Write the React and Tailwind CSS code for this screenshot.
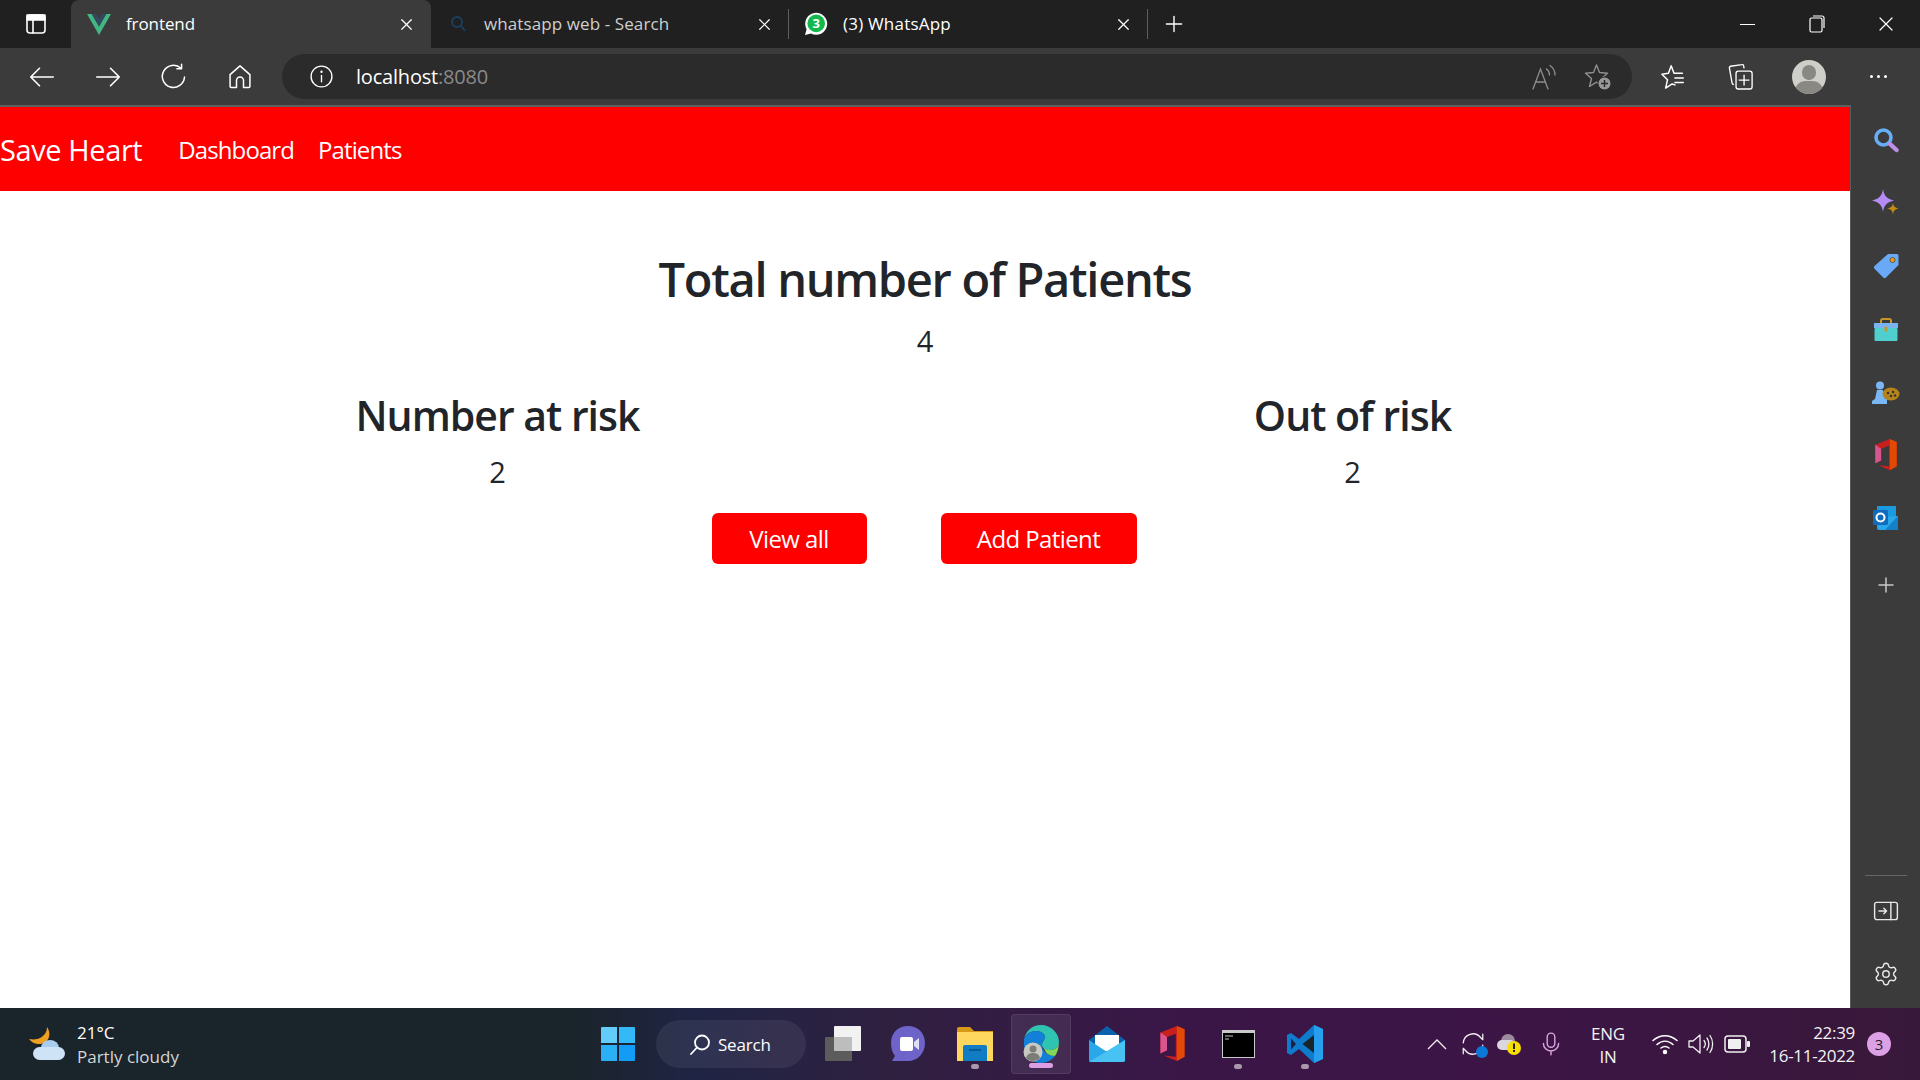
import React from "react";
import { Plus, Settings, X } from "lucide-react";

const Stroke = ({ size = 24, color = "#fff", sw = 1.5, children }) => (
  <svg width={size} height={size} viewBox="0 0 24 24" fill="none" stroke={color} strokeWidth={sw} strokeLinecap="round" strokeLinejoin="round">
    {children}
  </svg>
);

const Slot = ({ w, children }) => (
  <div className="flex h-full shrink-0 items-center justify-center" style={{ width: w }}>
    {children}
  </div>
);

const WhatsApp = () => (
  <svg width="26" height="26" viewBox="0 0 26 26">
    <path d="M2 24l1.600-5.800A11 11 0 1 1 8 22.500z" fill="#fff" />
    <circle cx="13.200" cy="12.400" r="8.800" fill="#12b84c" />
    <text x="13.200" y="17" textAnchor="middle" fontSize="13" fontWeight="700" fill="#fff" fontFamily="Open Sans, sans-serif">3</text>
  </svg>
);

const Office = ({ size = 26 }) => (
  <svg width={size} height={size * 1.3} viewBox="0 0 24 32">
    <path d="M1 6l15-6 7 3v25l-7 4-12-5 11 1V7L7 10v12l-6 3z" fill="#c81f1f" />
    <path d="M16 0l7 3v25l-7 4z" fill="#e14a06" />
    <path d="M1 6l6 4v12l-6 3z" fill="#d9558f" />
  </svg>
);

const Sidebar = () => (
  <aside className="flex h-full w-[70px] shrink-0 flex-col items-center border-l border-[#5a5a5a] bg-[#3b3b3b]">
    <div className="mt-[21px] flex h-[28px] items-center">
      <svg width="26" height="26" viewBox="0 0 26 26" fill="none">
        <circle cx="10.500" cy="10.500" r="7.500" stroke="#66aef5" strokeWidth="3.600" />
        <path d="M17 17l6.500 6" stroke="#bd8fe8" strokeWidth="4.400" strokeLinecap="round" />
      </svg>
    </div>
    <div className="mt-[34px] flex h-[30px] items-center">
      <svg width="28" height="28" viewBox="0 0 28 28">
        <path d="M11 0c1 7 4 10 11 11.500-7 1.500-10 4.500-11 11.500-1-7-4-10-11-11.500C7 10 10 7 11 0z" fill="#b58cf5" />
        <path d="M21 14c.6 3.500 1.800 4.700 6 5.500-4.200.8-5.400 2-6 6-.6-4-1.800-5.200-6-6 4.200-.8 5.400-2 6-5.500z" fill="#c38a14" />
      </svg>
    </div>
    <div className="mt-[34px] flex h-[28px] items-center">
      <svg width="26" height="26" viewBox="0 0 26 26">
        <path d="M15 1h9a1.500 1.500 0 0 1 1.500 1.500V12L13 24.500a2 2 0 0 1-2.800 0L1.500 15.800a2 2 0 0 1 0-2.800z" fill="#6aa9f8" />
        <circle cx="19.500" cy="7" r="2.600" fill="#e89a10" stroke="#333" strokeWidth=".6" />
      </svg>
    </div>
    <div className="mt-[36px] flex h-[28px] items-center">
      <svg width="26" height="24" viewBox="0 0 26 24">
        <path d="M8 6V2.500C8 1.500 9 1 10 1h6c1 0 2 .5 2 1.500V6" fill="none" stroke="#c8962a" strokeWidth="2" />
        <rect x="1" y="5" width="24" height="5" fill="#7ab4f0" />
        <rect x="1.500" y="10" width="23" height="13" rx="1" fill="#4fd0cf" />
        <rect x="11.500" y="8.500" width="3" height="5" rx="1" fill="#c8962a" />
      </svg>
    </div>
    <div className="mt-[35px] flex h-[28px] items-center">
      <svg width="28" height="24" viewBox="0 0 28 24">
        <circle cx="8" cy="4.500" r="4" fill="#7ab8f5" />
        <path d="M5 9h6l2 9h2v5H0v-3l3-2z" fill="#7ab8f5" />
        <ellipse cx="19" cy="13" rx="8.500" ry="6.500" fill="#b5831c" />
        <circle cx="16" cy="12" r="1.200" fill="#333" /><circle cx="21" cy="11" r="1.200" fill="#333" /><circle cx="19" cy="15" r="1.200" fill="#333" /><circle cx="23" cy="14.500" r="1.200" fill="#333" />
      </svg>
    </div>
    <div className="mt-[33px] flex h-[30px] items-center"><Office size={24} /></div>
    <div className="mt-[34px] flex h-[28px] items-center">
      <svg width="26" height="26" viewBox="0 0 26 26">
        <rect x="4" y="1" width="19" height="12" fill="#1a9be0" />
        <path d="M4 12l21-1v13a1 1 0 0 1-1 1H6a2 2 0 0 1-2-2z" fill="#28a8ea" />
        <path d="M25 11v14H12z" fill="#1380c8" />
        <rect x="0" y="5" width="15" height="15" rx="1.500" fill="#0f6cbd" />
        <circle cx="7.500" cy="12.500" r="4" fill="none" stroke="#fff" strokeWidth="2" />
      </svg>
    </div>
    <div className="mt-[44px] flex h-[18px] items-center"><Plus size={24} color="#c9c9c9" strokeWidth={1.500} /></div>
    <div className="flex-1" />
    <div className="h-px w-[42px] bg-[#666]" />
    <div className="mt-[21px] flex h-[28px] items-center">
      <Stroke size={26} sw={1.300} color="#e8e8e8">
        <rect x="1.500" y="4" width="21" height="16" rx="2" />
        <path d="M16.500 4v16M5.500 12h7M10 9.500l2.500 2.500-2.500 2.500" />
      </Stroke>
    </div>
    <div className="mt-[35px] mb-[20px] flex h-[28px] items-center">
      <Settings size={26} strokeWidth={1.300} color="#e8e8e8" />
    </div>
  </aside>
);

const TaskDot = ({ wide }) => (
  <span className={`absolute bottom-[5px] left-1/2 h-[5px] -translate-x-1/2 rounded-full ${wide ? "w-[24px] bg-[#dc9fe3]" : "w-[8px] bg-[#a998ac]"}`} />
);

const TaskIcon = ({ w, dot, active, children }) => (
  <div className={`relative flex h-[60px] shrink-0 items-center justify-center rounded ${active ? "ml-[4px] border border-[#ffffff14] bg-[#ffffff14]" : ""}`} style={{ width: w }}>
    {children}
    {dot && <TaskDot wide={active} />}
  </div>
);

const Taskbar = () => (
  <footer className="flex h-[72px] shrink-0 items-center bg-[linear-gradient(90deg,#1a242b_0%,#1a242b_30%,#1f2444_36%,#2f2040_46%,#3a1647_62%,#3c1545_80%,#38183a_100%)] text-white">
    <div className="flex w-[600px] shrink-0 items-center pl-[28px]">
      <svg width="38" height="34" viewBox="0 0 38 34">
        <path d="M19 0c5 7 2 17-8 17-4 0-8-2-10-5 8 2 18-2 18-12z" fill="#f0a020" />
        <ellipse cx="22" cy="21" rx="9" ry="8" fill="#a9cdf0" />
        <rect x="5" y="20" width="32" height="13" rx="6.500" fill="#cfe3f7" />
      </svg>
      <div className="ml-[11px] pt-[2px] text-[17px] leading-[24px] tracking-[0px]">
        <div>21°C</div>
        <div className="text-[#d5d5d5]">Partly cloudy</div>
      </div>
    </div>

    {/* start + search */}
    <svg width="36" height="36" viewBox="0 0 36 36" className="shrink-0">
      <path d="M1 2a1 1 0 0 1 1-1h15v16H1z" fill="#62cdfb" />
      <path d="M19 1h15a1 1 0 0 1 1 1v15H19z" fill="#33b9f8" />
      <path d="M1 19h16v16H2a1 1 0 0 1-1-1z" fill="#2bb0f6" />
      <path d="M19 19h16v15a1 1 0 0 1-1 1H19z" fill="#129cf5" />
    </svg>
    <div className="ml-[20px] flex h-[48px] w-[150px] shrink-0 items-center rounded-full bg-[#ffffff12] pl-[32px] pt-[1px]">
      <svg width="24" height="24" viewBox="0 0 24 24" fill="none" stroke="#fff" strokeWidth="1.800" strokeLinecap="round">
        <circle cx="14" cy="9.500" r="7" />
        <path d="M9 14.500L3 21" />
      </svg>
      <span className="ml-[6px] text-[17px] tracking-[-0.2px]">Search</span>
    </div>

    <div className="ml-[7px] flex h-full items-center">
      <TaskIcon w={60}>
        <svg width="38" height="38" viewBox="0 0 38 38">
          <rect x="1" y="12" width="27" height="24" rx="1" fill="#5c5c5c" />
          <rect x="10" y="1" width="27" height="25" rx="1" fill="#f2f2f2" />
          <rect x="10" y="12" width="18" height="14" fill="#bdbdbd" />
        </svg>
      </TaskIcon>
      <TaskIcon w={70}>
        <svg width="36" height="38" viewBox="0 0 36 38">
          <path d="M18 1c10 0 17 7 17 17s-7 18-17 18H2l3-5C2 27 1 23 1 18 1 8 8 1 18 1z" fill="#6d63c9" />
          <rect x="10" y="12" width="13" height="14" rx="2" fill="#fff" />
          <path d="M24 17l5-4v12l-5-4z" fill="#dfe0f5" />
        </svg>
      </TaskIcon>
      <TaskIcon w={64} dot>
        <svg width="36" height="34" viewBox="0 0 36 34">
          <path d="M0 2a2 2 0 0 1 2-2h11l4 4h19v30H0z" fill="#d89a16" />
          <rect x="0" y="5" width="36" height="29" fill="#ffd75e" />
          <path d="M6 20a2 2 0 0 1 2-2h20a2 2 0 0 1 2 2v14H6z" fill="#0f7cc4" />
          <rect x="12" y="22" width="12" height="2" fill="#0b5a92" />
        </svg>
      </TaskIcon>
      <TaskIcon w={60} dot active>
        <svg width="36" height="38" viewBox="0 0 36 38">
          <path d="M18 0C28 0 36 8 36 17c0 5-4 8-9 8s-8-2-8-5c0-4 3-5 3-8 0-3-4-6-9-6C7 6 2 10 1 14 3 6 9 0 18 0z" fill="#2fc4b2" />
          <path d="M1 14c2-5 7-8 12-8 5 0 9 3 9 6 0 3-3 4-3 8 0 6 5 11 13 11-3 4-8 7-14 7C8 38 1 30 1 20z" fill="#1280d8" />
          <path d="M36 17c0 5-4 8-9 8-3 0-5-1-6-2 1 5 5 8 11 8 2-3 4-8 4-14z" fill="#7fd858" />
          <circle cx="10" cy="27" r="9.500" fill="#c9c9c2" />
          <circle cx="10" cy="24" r="3.500" fill="#7d7d78" />
          <path d="M3 33c1-4 4-5 7-5s6 1 7 5c-2 2-4 3-7 3s-5-1-7-3z" fill="#7d7d78" />
        </svg>
      </TaskIcon>
      <TaskIcon w={72}>
        <svg width="36" height="36" viewBox="0 0 36 36">
          <path d="M18 0l18 14v20a2 2 0 0 1-2 2H2a2 2 0 0 1-2-2V14z" fill="#0a62ac" />
          <path d="M6 9h24v16H6z" fill="#fff" />
          <path d="M0 14l18 12 18-12v20a2 2 0 0 1-2 2H2a2 2 0 0 1-2-2z" fill="#2aa7e8" />
          <path d="M0 36l36-22v20a2 2 0 0 1-2 2z" fill="#48c2f2" />
        </svg>
      </TaskIcon>
      <TaskIcon w={58}><Office size={27} /></TaskIcon>
      <TaskIcon w={74} dot>
        <svg width="33" height="28" viewBox="0 0 33 28">
          <rect width="33" height="28" fill="#c9c9c9" />
          <rect x="1" y="3" width="31" height="24" fill="#000" />
          <path d="M3 6h8M3 9h4" stroke="#ccc" strokeWidth="1.200" />
        </svg>
      </TaskIcon>
      <TaskIcon w={60} dot>
        <svg width="36" height="38" viewBox="0 0 36 38">
          <path d="M27 0l9 4v30l-9 4-15-14-8 6-4-2V10l4-2 8 6z" fill="#0f7bcc" />
          <path d="M27 0l9 4v30l-9 4z" fill="#26a0ee" />
          <path d="M27 10L15.500 19 27 28z" fill="#1a242b" />
          <path d="M4 13.500v11l5-5.500z" fill="#1a2044" />
        </svg>
      </TaskIcon>
    </div>

    <div className="flex-1" />

    {/* tray */}
    <div className="flex h-full items-center">
      <Slot w={36}><svg width="20" height="12" viewBox="0 0 20 12" fill="none" stroke="#eee" strokeWidth="1.300"><path d="M1 11l9-9 9 9" /></svg></Slot>
      <Slot w={36}>
        <div className="relative">
          <Stroke size={26} sw={1.200} color="#f0f0f0"><path d="M3 11a9 9 0 0 1 16-5l2 2V3M21 13a9 9 0 0 1-16 5l-2-2v5" /></Stroke>
          <span className="absolute right-[-2px] bottom-[-1px] h-[12px] w-[12px] rounded-full bg-[#0a78d7]" />
        </div>
      </Slot>
      <Slot w={36}>
        <svg width="26" height="24" viewBox="0 0 26 24">
          <ellipse cx="12" cy="9" rx="7" ry="7" fill="#9d8a9f" />
          <rect x="1" y="8" width="18" height="10" rx="5" fill="#dcd7dc" />
          <circle cx="18" cy="16" r="7" fill="#f7de00" />
          <rect x="17" y="11.500" width="2" height="5.500" fill="#222" /><rect x="17" y="18" width="2" height="2" fill="#222" />
        </svg>
      </Slot>
      <Slot w={48}>
        <Stroke size={26} sw={1.300} color="#dba6e2"><rect x="8.500" y="2" width="7" height="13" rx="3.500" /><path d="M5 11.500a7 7 0 0 0 14 0M12 18.500V22" /></Stroke>
      </Slot>
      <div className="mr-[6px] flex w-[66px] shrink-0 flex-col items-center pt-[1px] text-[17px] leading-[23px] tracking-[-0.2px] text-[#f2f2f2]">
        <div>ENG</div>
        <div>IN</div>
      </div>
      <Slot w={36}>
        <svg width="26" height="22" viewBox="0 0 26 22" fill="none" stroke="#fff" strokeWidth="1.500" strokeLinecap="round">
          <path d="M1 7.500c7-6.500 17-6.500 24 0M5 11.500c5-4.500 11-4.500 16 0M9 15c2.500-2 5.500-2 8 0" />
          <circle cx="13" cy="19" r="1.500" fill="#fff" />
        </svg>
      </Slot>
      <Slot w={36}>
        <svg width="26" height="24" viewBox="0 0 26 24" fill="none" stroke="#f0f0f0" strokeWidth="1.300" strokeLinecap="round" strokeLinejoin="round">
          <path d="M1 9v6h4l7 6V3L5 9zM16 8.500c1.500 2 1.500 5 0 7M19 6c2.500 3.500 2.500 8.500 0 12M22 3.500c3.500 5 3.500 12 0 17" />
        </svg>
      </Slot>
      <Slot w={36}>
        <svg width="26" height="18" viewBox="0 0 26 18" fill="none">
          <rect x="1" y="1" width="21" height="16" rx="3" stroke="#f0f0f0" strokeWidth="1.500" />
          <rect x="4" y="4" width="13" height="10" rx="1" fill="#f0f0f0" />
          <rect x="23" y="6" width="3" height="6" rx="1" fill="#f0f0f0" />
        </svg>
      </Slot>
      <div className="w-[100px] shrink-0 text-right text-[17px] leading-[23px] tracking-[-0.3px] text-[#f2f2f2]">
        <div>22:39</div>
        <div>16-11-2022</div>
      </div>
      <div className="mr-[29px] ml-[12px] flex h-[24px] w-[24px] items-center justify-center rounded-full bg-[#dca0e4] text-[15px] text-[#2a1a2e]">3</div>
    </div>
  </footer>
);

export default function App() {
  return (
    <div className="flex h-screen w-screen flex-col overflow-hidden bg-white font-['Open_Sans',sans-serif]">
      {/* tab strip */}
      <div className="flex h-12 shrink-0 items-center bg-[#202020] text-[17px] tracking-[-0.1px] text-white">
        <Slot w={71}>
          <Stroke size={24} sw={1.600}><rect x="3" y="3" width="18" height="18" rx="3" /><path d="M9 8v13" /><path d="M3 3h18v5H3z" fill="#fff" /></Stroke>
        </Slot>
        <div className="flex h-full w-[360px] shrink-0 items-center rounded-t-lg bg-[#3b3b3b] pl-[16px]">
          <svg width="24" height="21" viewBox="0 0 24 21">
            <path d="M0 0h4.800L12 12.500 19.200 0H24L12 21z" fill="#41b883" />
            <path d="M4.800 0h4.400L12 5l2.800-5h4.400L12 12.500z" fill="#34495e" />
          </svg>
          <span className="ml-[15px] flex-1">frontend</span>
          <Slot w={50}><X size={19} strokeWidth={1.500} color="#fff" /></Slot>
        </div>
        <div className="flex h-full w-[357px] shrink-0 items-center pl-[19px] tracking-[0.1px] text-[#cfcfcf]">
          <svg width="16" height="18" viewBox="0 0 16 18" fill="none" stroke="#1b3f5f" strokeWidth="2">
            <circle cx="7" cy="7" r="5" /><path d="M11 11l4 5" />
          </svg>
          <span className="ml-[18px] flex-1">whatsapp web - Search</span>
          <Slot w={48}><X size={19} strokeWidth={1.500} color="#fff" /></Slot>
        </div>
        <div className="h-[30px] w-px bg-[#5f5f5f]" />
        <div className="flex h-full w-[358px] shrink-0 items-center pl-[14px] tracking-[0.2px]">
          <WhatsApp />
          <span className="ml-[14px] flex-1">(3) WhatsApp</span>
          <Slot w={48}><X size={19} strokeWidth={1.500} color="#fff" /></Slot>
        </div>
        <div className="h-[30px] w-px bg-[#5f5f5f]" />
        <Slot w={52}><Plus size={26} strokeWidth={1.300} color="#fff" /></Slot>
        <div className="flex-1" />
        <Slot w={69}><div className="h-[1px] w-[15px] bg-white" /></Slot>
        <Slot w={69}>
          <svg width="16" height="18" viewBox="0 0 16 18" fill="none" stroke="#fff" strokeWidth="1.200">
            <rect x="1" y="3" width="12" height="14" rx="1.500" /><path d="M4 1h9a2 2 0 0 1 2 2v10" />
          </svg>
        </Slot>
        <Slot w={69}><X size={24} strokeWidth={1.200} color="#fff" /></Slot>
      </div>

      {/* toolbar */}
      <div className="flex h-[57px] shrink-0 items-center bg-[#3b3b3b] pl-[9px] text-white">
        <Slot w={66}><Stroke size={30} sw={1.300}><path d="M21 12H3M10 5l-7 7 7 7" /></Stroke></Slot>
        <Slot w={66}><Stroke size={30} sw={1.300}><path d="M3 12h18M14 5l7 7-7 7" /></Stroke></Slot>
        <Slot w={66}><Stroke size={28} sw={1.300}><path d="M18 4.500A9.500 9.500 0 1 0 21 12M18.500 1v4h-4" /></Stroke></Slot>
        <Slot w={66}><Stroke size={28} sw={1.300}><path d="M3.500 10L12 2.500 20.500 10v10a1 1 0 0 1-1 1H15v-6a3 3 0 0 0-6 0v6H4.500a1 1 0 0 1-1-1z" /></Stroke></Slot>
        <div className="ml-[9px] flex h-[45px] w-[1350px] shrink-0 items-center rounded-full bg-[#2b2b2b] pl-[27px] pr-[7px]">
          <Stroke size={25} sw={1.300}><circle cx="12" cy="12" r="10" /><path d="M12 11v6" /><circle cx="12" cy="7.500" r=".5" /></Stroke>
          <span className="ml-[22px] flex-1 text-[20px] tracking-[-0.2px]">localhost<span className="text-[#8a8a8a]">:8080</span></span>
          <Slot w={54}>
            <svg width="24" height="26" viewBox="0 0 24 26" fill="none" stroke="#8f8f8f" strokeWidth="1.300" strokeLinecap="round">
              <path d="M1 25L8.500 5l7.500 20M3.500 18h10M14.500 5c2 1.500 3 3.500 3 6M18 1.500c3 2 5 5.500 5 9.500" />
            </svg>
          </Slot>
          <Slot w={54}>
            <svg width="28" height="28" viewBox="0 0 28 28" fill="none">
              <path d="M12.500 2l3 7.500 8 .7-6 5.300 2 8-7-4.300-7 4.300 2-8-6-5.300 8-.7z" stroke="#8f8f8f" strokeWidth="1.400" strokeLinejoin="round" />
              <circle cx="20.500" cy="20.500" r="6.500" fill="#999" stroke="#2b2b2b" strokeWidth="1" />
              <path d="M20.500 17v7M17 20.500h7" stroke="#2b2b2b" strokeWidth="1.500" />
            </svg>
          </Slot>
        </div>
        <div className="ml-[9px] flex h-full items-center">
          <Slot w={66}>
            <svg width="26" height="26" viewBox="0 0 28 28" fill="none" stroke="#fff" strokeWidth="1.600" strokeLinejoin="round" strokeLinecap="round">
              <path d="M11 2L8 10l-7 1 6 6-2 9 7-4.500 3 1M11 2l3 8h9M15 15h9M15 20h9" />
            </svg>
          </Slot>
          <Slot w={66}>
            <svg width="25" height="27" viewBox="0 0 28 30" fill="none" stroke="#fff" strokeWidth="1.500" strokeLinejoin="round">
              <path d="M18 6l-.5-3c-.1-1-1-1.500-2-1.300L3 3.500C2 3.700 1.400 4.500 1.600 5.500l3 17c.2 1 1 1.500 2 1.500" />
              <rect x="9" y="9" width="18" height="20" rx="2.500" /><path d="M18 13v12M12 19h12" />
            </svg>
          </Slot>
        </div>
        <div className="ml-[3px] flex h-[34px] w-[66px] shrink-0 items-center justify-center">
          <div className="relative h-[34px] w-[34px] overflow-hidden rounded-full bg-[#cfcfc9]">
            <div className="absolute top-[5px] left-[10px] h-[15px] w-[14px] rounded-full bg-[#8a8883]" />
            <div className="absolute top-[21px] left-[3px] h-[20px] w-[28px] rounded-full bg-[#8a8883]" />
          </div>
        </div>
        <div className="ml-[3px] flex w-[66px] shrink-0 items-center justify-center gap-[4px]">
          <span className="h-[3px] w-[3px] rounded-full bg-white" /><span className="h-[3px] w-[3px] rounded-full bg-white" /><span className="h-[3px] w-[3px] rounded-full bg-white" />
        </div>
      </div>

      {/* page + edge sidebar */}
      <div className="flex min-h-0 flex-1">
        <div className="flex min-w-0 flex-1 flex-col border-t-2 border-[#5f5f5f]">
          <nav className="flex h-[84px] shrink-0 items-center bg-[#ff0000] pt-[2px] text-white">
            <a className="text-[29px] tracking-[-0.4px]">Save Heart</a>
            <div className="ml-[36px] flex gap-[24px] text-[24px] tracking-[-0.9px]">
              <a>Dashboard</a>
              <a>Patients</a>
            </div>
          </nav>
          <main className="flex-1 pt-[54px] text-center text-[#212529]">
            <h1 className="text-[47px] leading-[68px] font-semibold tracking-[-1.300px]">Total number of Patients</h1>
            <p className="mt-[8px] text-[29px] leading-[40px]">4</p>
            <div className="mt-[26px] grid grid-cols-2 px-[70px]">
              <div>
                <h2 className="text-[41px] leading-[56px] font-semibold tracking-[-1px]">Number at risk</h2>
                <p className="mt-[9px] text-[29px] leading-[40px]">2</p>
              </div>
              <div>
                <h2 className="text-[41px] leading-[56px] font-semibold tracking-[-1px]">Out of risk</h2>
                <p className="mt-[9px] text-[29px] leading-[40px]">2</p>
              </div>
            </div>
            <div className="mt-[21px] flex justify-center gap-[74px] pr-[2px]">
              <button className="h-[51px] w-[155px] rounded-md bg-[#ff0000] text-[24px] tracking-[-0.6px] text-white">View all</button>
              <button className="h-[51px] w-[196px] rounded-md bg-[#ff0000] text-[24px] tracking-[-0.6px] text-white">Add Patient</button>
            </div>
          </main>
        </div>
        <Sidebar />
      </div>

      <Taskbar />
    </div>
  );
}
